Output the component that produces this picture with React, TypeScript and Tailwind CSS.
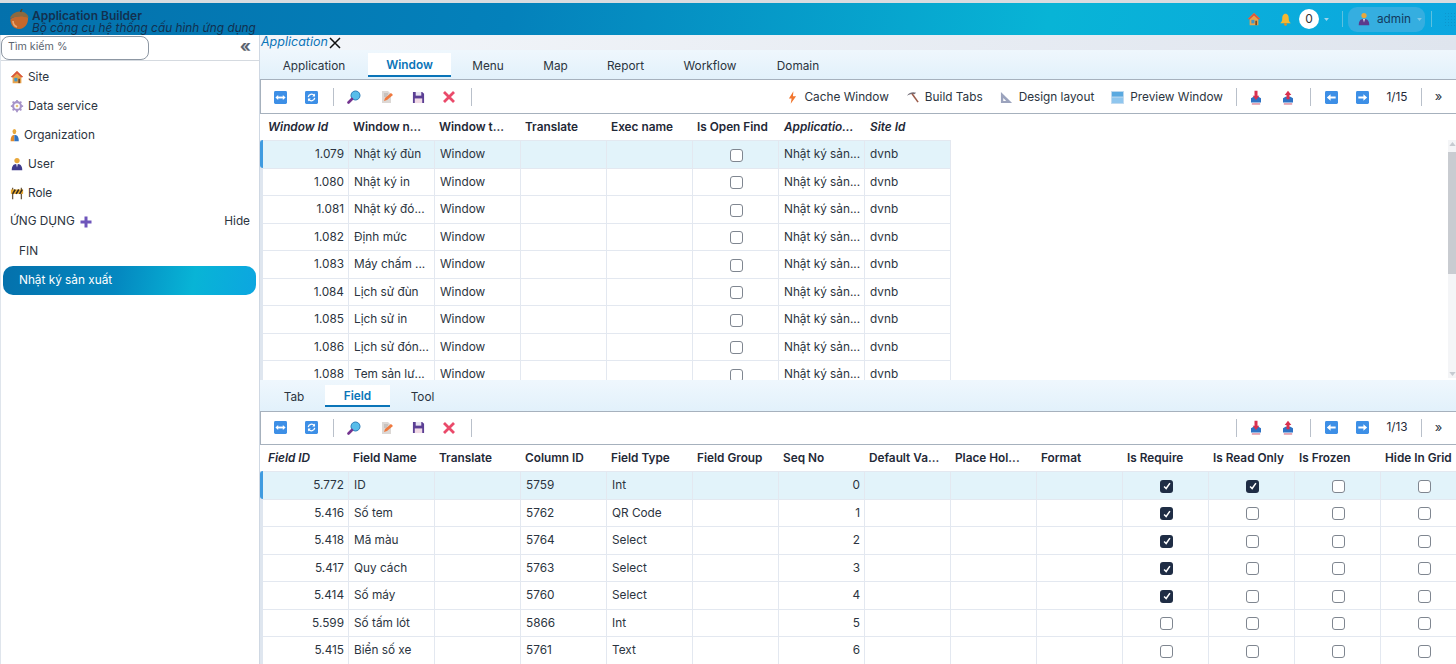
import React from "react";

const Acorn = () => (
  <svg viewBox="0 0 20 20" className="w-[20px] h-[20px] shrink-0">
    <path d="M1.500 10 C1 16 5 20 10 20 C16 19.500 19.500 15 19 8.500 C13 6 6 7 1.500 10Z" fill="#c4682c" />
    <path d="M1 9.500 C2 5 7 2 12 2.500 C16 3 19.500 5.500 19.500 9 C14 6.800 7 7 1 9.500Z" fill="#8c6a3f" />
    <path d="M4 12 C4 15 5.500 17 8 18" stroke="#e9a570" strokeWidth="1.700" fill="none" />
    <path d="M13 0 L11.500 3" stroke="#5d4020" strokeWidth="1.500" />
  </svg>
);
const Home = ({ c = "w-[14px] h-[14px]" }: { c?: string }) => (
  <svg viewBox="0 0 16 16" className={c + " shrink-0"}>
    <path d="M8 1 L1 8 L3 8 L3 15 L13 15 L13 8 L15 8Z" fill="#e8a34c" />
    <path d="M8 1 L1 8 L3 8.500 L8 4 L13 8.500 L15 8Z" fill="#d9553f" />
    <rect x="5" y="9" width="3.500" height="4" fill="#3f97c9" />
    <rect x="9.500" y="10" width="2" height="5" fill="#7a4b22" />
  </svg>
);
const Gear = () => (
  <svg viewBox="0 0 16 16" className="w-[14px] h-[14px] shrink-0">
    <circle cx="8" cy="8" r="4.500" fill="none" stroke="#a794c9" strokeWidth="2.500" />
    <path d="M8 1v3M8 12v3M1 8h3M12 8h3M3 3l2 2M11 11l2 2M13 3l-2 2M5 11l-2 2" stroke="#a794c9" strokeWidth="2" />
    <circle cx="8" cy="8" r="1.500" fill="#e6c37a" />
  </svg>
);
const Person = ({ c = "#2f4f9e" }: { c?: string }) => (
  <svg viewBox="0 0 16 16" className="w-[14px] h-[14px] shrink-0">
    <circle cx="8" cy="4" r="3" fill="#e8a83c" />
    <path d="M2 15 C2 9 5 8 8 8 C11 8 14 9 14 15Z" fill={c} />
    <path d="M7 8 L8 12 L9 8Z" fill="#f3f4f6" />
  </svg>
);
const OrgPerson = () => (
  <svg viewBox="0 0 16 16" className="w-[10px] h-[14px] shrink-0" preserveAspectRatio="none">
    <circle cx="7" cy="4" r="3" fill="#e8a83c" />
    <path d="M1 15 C1 9 4 8 7 8 L7 15Z" fill="#e08a2c" />
    <path d="M7 8 C11 8 14 9 14 15 L7 15Z" fill="#2f73c4" />
  </svg>
);
const Barrier = () => (
  <svg viewBox="0 0 16 16" className="w-[14px] h-[14px] shrink-0">
    <path d="M3 2v13M13 2v13" stroke="#6b5a45" strokeWidth="1.500" />
    <rect x="1" y="4" width="14" height="5" fill="#e9a92f" />
    <path d="M3 9 L6 4 M7 9 L10 4 M11 9 L14 4" stroke="#30291f" strokeWidth="1.700" />
  </svg>
);
const Bell = () => (
  <svg viewBox="0 0 16 16" className="w-[13px] h-[13px] shrink-0">
    <path d="M8 1 C5 1 4 4 4 7 C4 10 3 11 1.500 12.500 L14.500 12.500 C13 11 12 10 12 7 C12 4 11 1 8 1Z" fill="#f5b731" />
    <circle cx="8" cy="14" r="1.700" fill="#e58f1f" />
  </svg>
);
const Expand = () => (
  <svg viewBox="0 0 14 14" className="w-[13px] h-[13px] shrink-0">
    <rect width="14" height="14" rx="1.500" fill="#3d8fe6" />
    <path d="M1.500 7 L4.500 4.200 V9.800Z M12.500 7 L9.500 4.200 V9.800Z" fill="#fff" />
    <rect x="4" y="6" width="6" height="2" fill="#fff" />
  </svg>
);
const Refresh = () => (
  <svg viewBox="0 0 14 14" className="w-[13px] h-[13px] shrink-0">
    <rect width="14" height="14" rx="1.500" fill="#3d8fe6" />
    <path d="M3.500 6.500 A3.600 3.600 0 0 1 10 5 M10.500 7.500 A3.600 3.600 0 0 1 4 9" stroke="#fff" strokeWidth="1.400" fill="none" />
    <path d="M10.800 2.800 V6 H7.800Z M3.200 11.200 V8 H6.200Z" fill="#fff" />
  </svg>
);
const Search = () => (
  <svg viewBox="0 0 14 14" className="w-[14px] h-[14px] shrink-0">
    <circle cx="8.500" cy="5.500" r="4.500" fill="#57bdea" stroke="#2b7cb8" strokeWidth="1" />
    <path d="M5 9 L1.500 12.500" stroke="#74348f" strokeWidth="2.600" strokeLinecap="round" />
  </svg>
);
const Edit = () => (
  <svg viewBox="0 0 14 14" className="w-[14px] h-[14px] shrink-0">
    <path d="M2 1 H8 L11 4 V13 H2Z" fill="#dcd8d5" />
    <path d="M4 11 L5 8 L11 3 L13 5 L7 10Z" fill="#f0793e" />
    <path d="M4 4h4M4 6h3" stroke="#b3aca8" strokeWidth="1" />
  </svg>
);
const Save = () => (
  <svg viewBox="0 0 14 14" className="w-[13px] h-[13px] shrink-0">
    <path d="M1 1 H11 L13 3 V13 H1Z" fill="#5b3f94" />
    <rect x="4" y="1" width="6" height="4" fill="#e9e6f2" />
    <rect x="3" y="8" width="8" height="5" fill="#f1dbe6" />
  </svg>
);
const Del = () => (
  <svg viewBox="0 0 14 14" className="w-[14px] h-[14px] shrink-0">
    <path d="M2 2 L12 12 M12 2 L2 12" stroke="#ea4a6a" strokeWidth="2.800" />
  </svg>
);
const Down = ({ up = false }: { up?: boolean }) => (
  <svg viewBox="0 0 14 18" className="w-[12px] h-[15px] shrink-0">
    <path d="M1 10 L4 8 H10 L13 10 V15 H1Z" fill="#2f73c4" />
    <rect x="2" y="16" width="10" height="1.500" fill="#d77a8f" />
    <path
      d={up ? "M7 1 L11 6 H8.800 V11 H5.200 V6 H3Z" : "M5.200 1 H8.800 V7 H11 L7 12 L3 7 H5.200Z"}
      fill="#d9304f"
    />
  </svg>
);
const Arrow = ({ right = false }: { right?: boolean }) => (
  <svg viewBox="0 0 14 14" className="w-[13px] h-[13px] shrink-0">
    <rect width="14" height="14" rx="1.500" fill="#3d8fe6" />
    <path d={right ? "M12 7 L8 3.500 V5.800 H2.500 V8.200 H8 V10.500Z" : "M2 7 L6 3.500 V5.800 H11.500 V8.200 H6 V10.500Z"} fill="#fff" />
  </svg>
);
const Bolt = () => (
  <svg viewBox="0 0 10 14" className="w-[9px] h-[13px] shrink-0">
    <path d="M6 0 L1 8 H4 L3 14 L9 5.500 H5.500Z" fill="#f2762e" />
  </svg>
);
const Pick = () => (
  <svg viewBox="0 0 14 14" className="w-[13px] h-[13px] shrink-0">
    <path d="M1 5 C4 1 8 1 11 2 L9 3.500 C6.500 3 4 3.500 1 5Z" fill="#75707a" />
    <path d="M6.500 3 L13 12" stroke="#9b5b4a" strokeWidth="1.700" />
  </svg>
);
const Ruler = () => (
  <svg viewBox="0 0 14 14" className="w-[13px] h-[13px] shrink-0">
    <path fillRule="evenodd" d="M1 1 L13 13 H1Z M3.500 7.500 V10.700 H6.700Z" fill="#9ba3bd" />
  </svg>
);
const Preview = () => (
  <svg viewBox="0 0 14 14" className="w-[13px] h-[13px] shrink-0">
    <rect width="14" height="14" fill="#c4dcf0" />
    <rect x="1" y="1" width="12" height="5" fill="#5aa9e0" />
    <rect x="1" y="7" width="12" height="6" fill="#8fc6ee" />
  </svg>
);

const Sep = () => <div className="w-px h-[18px] bg-[#b9c0ca] shrink-0" />;
const Tool = ({ children, w = "w-[32px]" }: { children: React.ReactNode; w?: string }) => (
  <div className={`${w} flex items-center justify-center shrink-0`}>{children}</div>
);
const Labeled = ({ icon, label, gap = "gap-[6px]" }: { icon: React.ReactNode; label: string; gap?: string }) => (
  <div className={`flex items-center ${gap} whitespace-nowrap`}>
    {icon}
    <span className="pt-[1px]">{label}</span>
  </div>
);

const LeftTools = () => (
  <div className="flex items-center">
    <Tool><Expand /></Tool>
    <Tool w="w-[30px]"><Refresh /></Tool>
    <div className="w-[14px] flex justify-center"><Sep /></div>
    <Tool w="w-[28px]"><Search /></Tool>
    <Tool w="w-[38px]"><Edit /></Tool>
    <Tool w="w-[24px]"><Save /></Tool>
    <Tool w="w-[38px]"><Del /></Tool>
    <div className="w-[6px] flex justify-center"><Sep /></div>
  </div>
);
const RightTools = ({ page }: { page: string }) => (
  <div className="flex items-center pr-[1px]">
    <Sep />
    <div className="w-[3px]" />
    <Tool><Down /></Tool>
    <Tool><Down up /></Tool>
    <div className="w-[6px]" />
    <Sep />
    <Tool w="w-[40px]"><Arrow /></Tool>
    <Tool w="w-[22px]"><Arrow right /></Tool>
    <div className="w-[48px] text-center text-[#1f2937] pt-[1px]">{page}</div>
    <Sep />
    <div className="w-[33px] text-center text-[13px]">»</div>
  </div>
);

const Check = ({ on }: { on: boolean }) =>
  on ? (
    <div className="ml-[1px] w-[13px] h-[13px] rounded-[3px] bg-[#1f2d45] flex items-center justify-center">
      <svg viewBox="0 0 12 12" className="w-[10px] h-[10px]">
        <path d="M2.500 6.500 L5 9 L9.500 2.500" stroke="#fff" strokeWidth="1.800" fill="none" />
      </svg>
    </div>
  ) : (
    <div className="ml-[1px] w-[13px] h-[13px] rounded-[3px] border border-[#7f8690] bg-white" />
  );

type Cell = string | boolean | number;
type Col = { name: string; italic?: boolean; right?: boolean; check?: boolean };

const Table = ({ cols, rows, h }: { cols: Col[]; rows: Cell[][]; h: string }) => (
  <div className={`${h} overflow-hidden bg-white relative`}>
    <div className="flex h-[26px] items-center pt-[1px] pl-[3px] font-semibold text-[#1f2937]">
      {cols.map((c, i) => (
        <div key={i} className={`w-[86px] shrink-0 whitespace-nowrap overflow-hidden ${c.italic ? "italic pl-[5px]" : "pl-[4px]"}`}>
          {c.name}
        </div>
      ))}
    </div>
    <div className="border-l-[3px] border-[#dfe6ef] w-fit">
      {rows.map((r, ri) => (
        <div key={ri} className={`flex h-[27.500px] w-fit border-t border-[#e3e8f0] ${ri === 0 ? "bg-[#e2f3fa]" : ""}`}>
          {cols.map((c, i) => (
            <div
              key={i}
              className={`w-[86px] shrink-0 border-r border-[#e3e8f0] flex items-center pl-[5px] pr-[4px] pt-[2px] whitespace-nowrap overflow-hidden text-[#2b3440] ${
                c.right ? "justify-end" : ""
              } ${c.check ? "justify-center" : ""}`}
            >
              {c.check ? <Check on={!!r[i]} /> : String(r[i])}
            </div>
          ))}
        </div>
      ))}
    </div>
    <div className="absolute left-0 top-[26px] w-[3px] h-[28px] rounded-l bg-[#3f9be0]" />
  </div>
);

const winCols: Col[] = [
  { name: "Window Id", italic: true, right: true },
  { name: "Window n..." },
  { name: "Window t..." },
  { name: "Translate" },
  { name: "Exec name" },
  { name: "Is Open Find", check: true },
  { name: "Applicatio...", italic: true },
  { name: "Site Id", italic: true },
];
const winRows: Cell[][] = [
  ["1.079", "Nhật ký đùn"],
  ["1.080", "Nhật ký in"],
  ["1.081", "Nhật ký đó..."],
  ["1.082", "Định mức"],
  ["1.083", "Máy chấm ..."],
  ["1.084", "Lịch sử đùn"],
  ["1.085", "Lịch sử in"],
  ["1.086", "Lịch sử đón..."],
  ["1.088", "Tem sản lư..."],
].map(([a, b]) => [a, b, "Window", "", "", false, "Nhật ký sản...", "dvnb"]);

const fieldCols: Col[] = [
  { name: "Field ID", italic: true, right: true },
  { name: "Field Name" },
  { name: "Translate" },
  { name: "Column ID" },
  { name: "Field Type" },
  { name: "Field Group" },
  { name: "Seq No", right: true },
  { name: "Default Va..." },
  { name: "Place Hol..." },
  { name: "Format" },
  { name: "Is Require", check: true },
  { name: "Is Read Only", check: true },
  { name: "Is Frozen", check: true },
  { name: "Hide In Grid", check: true },
];
const fieldRows: Cell[][] = [
  ["5.772", "ID", "", "5759", "Int", "", 0, "", "", "", true, true, false, false],
  ["5.416", "Số tem", "", "5762", "QR Code", "", 1, "", "", "", true, false, false, false],
  ["5.418", "Mã màu", "", "5764", "Select", "", 2, "", "", "", true, false, false, false],
  ["5.417", "Quy cách", "", "5763", "Select", "", 3, "", "", "", true, false, false, false],
  ["5.414", "Số máy", "", "5760", "Select", "", 4, "", "", "", true, false, false, false],
  ["5.599", "Số tấm lót", "", "5866", "Int", "", 5, "", "", "", false, false, false, false],
  ["5.415", "Biển số xe", "", "5761", "Text", "", 6, "", "", "", false, false, false, false],
];

const MenuItem = ({ icon, label, gap = "gap-[4px]" }: { icon: React.ReactNode; label: string; gap?: string }) => (
  <div className={`h-[29px] flex items-center ${gap} pl-[9px] pt-[1px] text-[#2b3440]`}>
    {icon}
    <span className="pt-[1px]">{label}</span>
  </div>
);

const Caret = ({ c = "#9fd4ec" }: { c?: string }) => (
  <svg viewBox="0 0 8 5" className="w-[5px] h-[3px] shrink-0">
    <path d="M0 0 H8 L4 5Z" fill={c} />
  </svg>
);

const grad = "bg-[linear-gradient(100deg,#0471ac_0%,#0481bb_35%,#08b4d6_72%,#0ca6e0_100%)]";
const tabBase = "flex items-center justify-center pt-[4px]";
const tabActive = "bg-white text-[#0a74b8] font-semibold border-b-2 border-[#0a74b8]";

export default function App() {
  return (
    <div className="w-[1456px] h-[664px] overflow-hidden bg-white text-[11.800px] text-[#1f2937] font-['Inter',sans-serif] flex flex-col">
      <div className="h-[3px] bg-[#d9dce0] shrink-0" />
      <header className={`h-[32px] shrink-0 ${grad} flex items-center pl-[9px]`}>
        <Acorn />
        <div className="ml-[3px] flex flex-col leading-[13px] pt-[5px] text-[#12304f]">
          <span className="font-semibold text-[12px]">Application Builder</span>
          <span className="italic text-[11.800px] whitespace-nowrap">Bộ công cụ hệ thống cấu hình ứng dụng</span>
        </div>
        <div className="ml-auto flex items-center">
          <Home />
          <div className="w-[18px]" />
          <Bell />
          <div className="ml-[7px] w-[20px] h-[20px] rounded-full bg-white text-[#333] flex items-center justify-center text-[12px]">0</div>
          <div className="ml-[5px]"><Caret /></div>
          <div className="ml-[13px] w-px h-[16px] bg-[#5cc1e0]" />
          <div className="ml-[5px] h-[25px] w-[77px] rounded-[9px] bg-[#35aee0] flex items-center pl-[9px] gap-[6px] text-[#123a5e]">
            <Person c="#5b3a8c" />
            <span className="pt-[1px]">admin</span>
            <Caret c="#7cc8e8" />
          </div>
          <div className="ml-[6px] w-px h-[16px] bg-[#5cc1e0]" />
          <div className="ml-[12px] w-[12px] h-[14px] opacity-40 bg-[radial-gradient(#0a7fb5_1px,transparent_1px)] bg-[length:3px_3px]" />
        </div>
      </header>

      <div className="flex flex-1 min-h-0">
        <aside className="w-[260px] shrink-0 border-r border-[#cfd8e3] flex flex-col border-l border-l-[#dfe5ec]">
          <div className="h-[26px] flex items-center border-b border-[#d5dae0]">
            <div className="w-[148px] h-[24px] rounded-[8px] border border-[#8d97a3] flex items-center pl-[6px] text-[#5b6470] text-[10.700px] shrink-0">
              Tìm kiếm %
            </div>
            <div className="ml-auto mr-[8px] text-[#5b6470] font-bold text-[17px] leading-none pb-[3px]">«</div>
          </div>
          <div className="pt-[1px]">
            <MenuItem icon={<Home />} label="Site" />
            <MenuItem icon={<Gear />} label="Data service" />
            <MenuItem icon={<OrgPerson />} label="Organization" />
            <MenuItem icon={<Person c="#3f3b8c" />} label="User" />
            <MenuItem icon={<Barrier />} label="Role" />
            <div className="h-[29px] flex items-center pl-[9px] pr-[9px] pt-[1px] text-[#2b3440]">
              <span>ỨNG DỤNG</span>
              <span className="ml-[5px]">
                <svg viewBox="0 0 12 12" className="w-[12px] h-[12px]">
                  <path d="M6 0.500 V11.500 M0.500 6 H11.500" stroke="#6e55bb" strokeWidth="3" />
                </svg>
              </span>
              <span className="ml-auto">Hide</span>
            </div>
            <div className="h-[30px] flex items-center pl-[18px] pt-[2px] text-[#2b3440]">FIN</div>
            <div className="h-[29px] ml-[2px] mr-[3px] rounded-[10px] bg-[linear-gradient(100deg,#0471ac_0%,#0488c0_45%,#08b4d6_75%,#0ca6e0_100%)] text-white flex items-center pl-[16px]">
              Nhật ký sản xuất
            </div>
          </div>
        </aside>

        <main className="flex-1 min-w-0 flex flex-col">
          <div className="h-[15px] shrink-0 bg-[linear-gradient(90deg,#f3f6fa,#dfe5ee)] flex items-center">
            <span className="italic text-[#0a74b8] text-[12.500px] pl-[1px]">Application</span>
            <svg viewBox="0 0 12 12" className="w-[12px] h-[12px] ml-[1px]">
              <path d="M1 1 L11 11 M11 1 L1 11" stroke="#111" strokeWidth="1.500" />
            </svg>
          </div>
          <div className="h-[30px] shrink-0 flex items-start pt-[3px] bg-[linear-gradient(180deg,#eff7fd,#e2f1fb)] text-[#2b3440] border-b border-[#a6b1bd]">
            <div className={`w-[108px] h-[24px] ${tabBase}`}>Application</div>
            <div className={`w-[83px] h-[24px] ${tabBase} ${tabActive}`}>Window</div>
            <div className={`w-[74px] h-[24px] ${tabBase}`}>Menu</div>
            <div className={`w-[61px] h-[24px] ${tabBase}`}>Map</div>
            <div className={`w-[79px] h-[24px] ${tabBase}`}>Report</div>
            <div className={`w-[90px] h-[24px] ${tabBase}`}>Workflow</div>
            <div className={`w-[86px] h-[24px] ${tabBase}`}>Domain</div>
          </div>
          <div className="h-[34px] shrink-0 flex items-center pt-[1px] border-b border-[#a6b1bd] border-l border-l-[#a6b1bd] pl-[3px] text-[#2b3440] bg-white">
            <LeftTools />
            <div className="ml-auto flex items-center gap-[17px] mr-[13px]">
              <Labeled icon={<Bolt />} label="Cache Window" gap="gap-[8px]" />
              <Labeled icon={<Pick />} label="Build Tabs" />
              <Labeled icon={<Ruler />} label="Design layout" />
              <Labeled icon={<Preview />} label="Preview Window" />
            </div>
            <RightTools page="1/15" />
          </div>
          <div className="relative">
            <Table cols={winCols} rows={winRows} h="h-[266px]" />
            <div className="absolute right-0 top-[26px] w-[8px] h-[238px] bg-[#f4f5f7] flex flex-col items-center">
              <svg viewBox="0 0 8 5" className="w-[7px] h-[4px] mt-[2px]"><path d="M4 0 L8 5 H0Z" fill="#c6cbd1" /></svg>
              <div className="mt-[6px] w-full h-[122px] bg-[#c9ccd1]" />
              <svg viewBox="0 0 8 5" className="w-[7px] h-[4px] mt-auto mb-[2px]"><path d="M4 5 L8 0 H0Z" fill="#c6cbd1" /></svg>
            </div>
          </div>

          <div className="h-[32px] shrink-0 flex items-start pt-[5px] bg-[linear-gradient(180deg,#eff7fd,#e2f1fb)] text-[#2b3440] border-b border-[#a6b1bd]">
            <div className={`w-[65px] pl-[3px] h-[22px] ${tabBase}`}>Tab</div>
            <div className={`w-[65px] h-[22px] ${tabBase} ${tabActive}`}>Field</div>
            <div className={`w-[65px] h-[22px] ${tabBase}`}>Tool</div>
          </div>
          <div className="h-[33px] shrink-0 flex items-center pb-[1px] border-b border-[#a6b1bd] border-l border-l-[#a6b1bd] pl-[3px] bg-white text-[#2b3440]">
            <LeftTools />
            <div className="ml-auto"><RightTools page="1/13" /></div>
          </div>
          <Table cols={fieldCols} rows={fieldRows} h="flex-1 min-h-0" />
        </main>
      </div>
    </div>
  );
}
